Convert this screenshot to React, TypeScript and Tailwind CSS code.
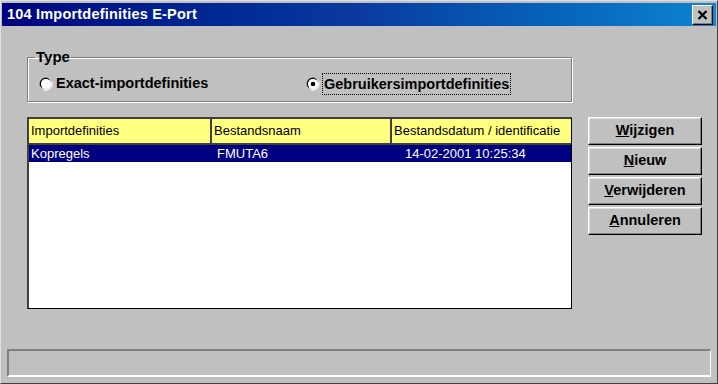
import React from "react";

// Win98-style radio button
const Radio = ({ checked }: { checked?: boolean }) => (
  <svg width="14" height="14" viewBox="0 0 12 12" className="shrink-0">
    <path d="M8 1.2 A5.3 5.3 0 0 0 1.2 8" fill="none" stroke="#808080" strokeWidth="1" />
    <path d="M8.8 2.5 A4.3 4.3 0 0 0 2.5 8.8" fill="none" stroke="#000" strokeWidth="1" />
    <circle cx="6" cy="6" r="4.2" fill="#fff" />
    <path d="M4 10.8 A5.3 5.3 0 0 0 10.8 4" fill="none" stroke="#fff" strokeWidth="1" />
    {checked && <circle cx="6" cy="6" r="2" fill="#000" />}
  </svg>
);

const WinButton = ({ accel, rest }: { accel: string; rest: string }) => (
  <button className="h-[28px] w-[114px] bg-[#c0c0c0] border-t border-l border-t-white border-l-white border-r border-b border-r-black border-b-black shadow-[inset_-1px_-1px_0_#808080,inset_1px_1px_0_#dfdfdf] text-[14.5px] font-bold text-black">
    <span className="underline">{accel}</span>
    {rest}
  </button>
);

export default function App() {
  const rows = [
    { name: "Kopregels", file: "FMUTA6", date: "14-02-2001 10:25:34" },
  ];

  return (
    <div
      className="w-[718px] h-[384px] bg-[#c0c0c0] border border-t-[#dfdfdf] border-l-[#dfdfdf] border-r-[#404040] border-b-[#404040] p-[1px] flex flex-col select-none"
      style={{ fontFamily: '"Liberation Sans", Arial, sans-serif' }}
    >
      {/* Title bar */}
      <div className="h-[23px] mt-[1px] bg-gradient-to-r from-[#000080] via-[#0a3aa0] to-[#1084d0] flex items-center justify-between pl-[5px] pr-[3px]">
        <span className="text-white font-bold text-[14.5px] tracking-[0.2px]">104 Importdefinities E-Port</span>
        <button className="w-[21px] h-[20px] bg-[#c0c0c0] border-t border-l border-t-white border-l-white border-r border-b border-r-black border-b-black shadow-[inset_-1px_-1px_0_#808080] flex items-center justify-center">
          <svg width="11" height="10" viewBox="0 0 11 10">
            <path d="M1.5 1 L9.5 9 M9.5 1 L1.5 9" stroke="#000" strokeWidth="2.2" />
          </svg>
        </button>
      </div>

      {/* Type group */}
      <fieldset className="ml-[25px] mt-[23px] w-[545px] h-[53px] border border-[#808080] shadow-[1px_1px_0_#fff,inset_1px_1px_0_#fff] px-[8px] pb-[6px]">
        <legend className="ml-[-1px] px-[1px] text-[15px] font-bold text-black leading-[16px]">Type</legend>
        <div className="flex items-center h-[24px] mt-[7px]">
          <div className="flex items-center gap-[3px] w-[270px] pl-[3px]">
            <Radio />
            <span className="text-[14.5px] font-bold text-black">Exact-importdefinities</span>
          </div>
          <div className="flex items-center gap-[2px]">
            <Radio checked />
            <span className="text-[14.5px] font-bold text-black border border-dotted border-black px-[1px] leading-[20px]">
              Gebruikersimportdefinities
            </span>
          </div>
        </div>
      </fieldset>

      {/* List + buttons */}
      <div className="flex ml-[25px] mt-[15px] gap-[16px]">
        <div className="w-[545px] h-[192px] bg-white border border-black border-t-2 border-l-2 border-t-[#404040] border-l-[#404040] text-[13px] text-black">
          <div className="flex h-[26px] bg-[#ffff80] border-b-2 border-[#404040]">
            <div className="w-[183px] flex items-center pl-[2px] border-r-2 border-[#404040]">Importdefinities</div>
            <div className="w-[180px] flex items-center pl-[2px] border-r-2 border-[#404040]">Bestandsnaam</div>
            <div className="flex-1 flex items-center pl-[2px] whitespace-nowrap overflow-hidden">Bestandsdatum / identificatie</div>
          </div>
          {rows.map((r) => (
            <div key={r.name} className="flex h-[17px] bg-[#000080] text-white items-center">
              <div className="w-[185px] pl-[2px]">{r.name}</div>
              <div className="w-[180px] pl-[3px]">{r.file}</div>
              <div className="flex-1 pl-[11px]">{r.date}</div>
            </div>
          ))}
        </div>

        <div className="flex flex-col gap-[2px]">
          <WinButton accel="W" rest="ijzigen" />
          <WinButton accel="N" rest="ieuw" />
          <WinButton accel="V" rest="erwijderen" />
          <WinButton accel="A" rest="nnuleren" />
        </div>
      </div>

      {/* Status bar */}
      <div className="mt-auto mb-[5px] mx-[5px] h-[28px] border border-t-[#808080] border-l-[#808080] border-r-white border-b-white border-t-2 border-l-2 border-b-2" />
    </div>
  );
}
